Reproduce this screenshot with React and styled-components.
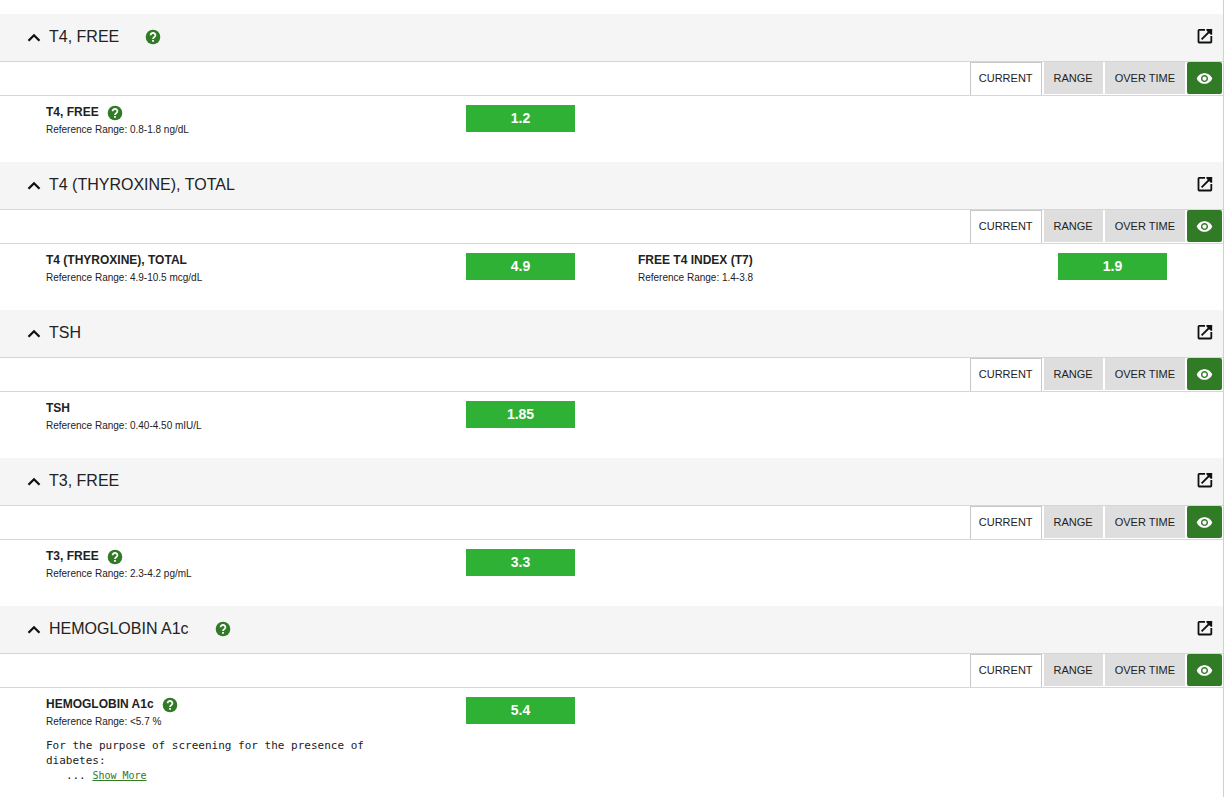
import React from "react";
import styled, { createGlobalStyle } from "styled-components";
import { MdVisibility } from "react-icons/md";

const GlobalStyle = createGlobalStyle`
  * { box-sizing: border-box; }
  body {
    margin: 0;
    background: #fff;
    color: #222;
    font-family: "Liberation Sans", Arial, sans-serif;
  }
`;

const Page = styled.main`
  min-height: 100vh;
  padding-top: 14px;
  border-right: 1px solid #d0d0d0;
`;

const Panel = styled.section`
  min-height: 148px;
`;

const PanelHeader = styled.header`
  display: flex;
  align-items: center;
  height: 48px;
  padding: 0 8px 2px 22px;
  background: #f5f5f5;
  border-bottom: 1px solid #d6d6d6;
`;

const IconButton = styled.button`
  display: flex;
  padding: 0;
  border: 0;
  background: none;
  color: ${(p) => p.$color || "#111"};
  cursor: pointer;
`;

const CollapseButton = styled(IconButton)`
  margin-right: 3px;
  padding-top: 2px;
`;

const OpenButton = styled(IconButton)`
  margin-left: auto;
  padding-bottom: 2px;
`;

const Title = styled.h2`
  margin: 0 25px 0 0;
  font-size: 16px;
  line-height: 20px;
  font-weight: 400;
`;

const Toolbar = styled.div`
  display: flex;
  justify-content: flex-end;
  gap: 2px;
  height: 34px;
  padding: 0 1px 1px 0;
  border-bottom: 1px solid #d6d6d6;
`;

const ViewButton = styled.button`
  padding: 0 10px 1px;
  border: 0;
  background: #dedede;
  color: #222;
  font-family: inherit;
  font-size: 11px;
  line-height: 16px;
  cursor: pointer;

  &[aria-pressed="true"] {
    margin-bottom: -1px;
    padding: 0 8px 3px;
    border: 1px solid #c8c8c8;
    border-bottom: 0;
    background: #fff;
  }
`;

const VisibilityButton = styled.button`
  display: flex;
  align-items: center;
  justify-content: center;
  width: 35px;
  padding: 0 1px 0 0;
  border: 0;
  border-radius: 2px;
  background: #317a26;
  color: #fff;
  cursor: pointer;
`;

const Results = styled.div`
  display: grid;
  grid-template-columns: 1fr 1fr;
  padding: 8px 20px 8px 19px;
`;

const Result = styled.div`
  display: flex;
  align-items: flex-start;
  padding: 0 36px 0 27px;
`;

const Details = styled.div`
  flex: 1;
`;

const NameRow = styled.div`
  display: flex;
  align-items: center;
  gap: 7px;
  height: 18px;
`;

const Name = styled.h3`
  margin: 0;
  padding-bottom: 2px;
  font-size: 12px;
  line-height: 16px;
  font-weight: 700;
`;

const Reference = styled.p`
  margin: 0;
  font-size: 10px;
  line-height: 16px;
`;

const Note = styled.p`
  max-width: 330px;
  margin: 8px 0 0;
  font-family: "DejaVu Sans Mono", monospace;
  font-size: 11px;
  line-height: 15px;
  white-space: pre-wrap;
`;

const MoreLink = styled.a`
  color: #317a26;
  font-size: 10px;
`;

const Value = styled.output`
  width: 109px;
  height: 27px;
  margin-top: 1px;
  background: #2fb135;
  color: #fff;
  font-size: 14px;
  line-height: 26px;
  font-weight: 700;
  text-align: center;
`;

function ChevronUp() {
  return (
    <svg width="24" height="24" viewBox="0 0 24 24" aria-hidden="true">
      <path
        d="M6.5 14.8 12 9.3l5.5 5.5"
        fill="none"
        stroke="currentColor"
        strokeWidth="2.3"
      />
    </svg>
  );
}

function OpenIcon() {
  return (
    <svg width="20" height="20" viewBox="0 0 20 20" aria-hidden="true">
      <path
        d="M10 3.9H4.2a.7.7 0 0 0-.7.7v11.2c0 .4.3.7.7.7h11.4a.7.7 0 0 0 .7-.7V10M6.6 13.4 15 5"
        fill="none"
        stroke="currentColor"
        strokeWidth="1.8"
      />
      <path d="M11.4 3h5.8v5.8h-1.4L11.4 4.4Z" fill="currentColor" />
    </svg>
  );
}

function HelpIcon() {
  return (
    <svg width="18" height="18" viewBox="0 0 18 18" aria-hidden="true">
      <circle cx="9" cy="9" r="7.3" fill="currentColor" />
      <path
        d="M6.6 7.3a2.4 2.2 0 1 1 3.9 1.6C9.6 9.6 9 9.9 9 11.1"
        fill="none"
        stroke="#fff"
        strokeWidth="1.8"
      />
      <path d="M8.1 12h1.8v1.8H8.1z" fill="#fff" />
    </svg>
  );
}

const GREEN = "#317a26";

const panels = [
  {
    title: "T4, FREE",
    help: true,
    results: [
      { name: "T4, FREE", help: true, range: "0.8-1.8 ng/dL", value: "1.2" },
    ],
  },
  {
    title: "T4 (THYROXINE), TOTAL",
    results: [
      { name: "T4 (THYROXINE), TOTAL", range: "4.9-10.5 mcg/dL", value: "4.9" },
      { name: "FREE T4 INDEX (T7)", range: "1.4-3.8", value: "1.9" },
    ],
  },
  {
    title: "TSH",
    results: [{ name: "TSH", range: "0.40-4.50 mIU/L", value: "1.85" }],
  },
  {
    title: "T3, FREE",
    results: [
      { name: "T3, FREE", help: true, range: "2.3-4.2 pg/mL", value: "3.3" },
    ],
  },
  {
    title: "HEMOGLOBIN A1c",
    help: true,
    results: [
      {
        name: "HEMOGLOBIN A1c",
        help: true,
        range: "<5.7 %",
        value: "5.4",
        note: "For the purpose of screening for the presence of diabetes:",
      },
    ],
  },
];

const views = ["CURRENT", "RANGE", "OVER TIME"];

function LabPanel({ title, help, results }) {
  const [view, setView] = React.useState("CURRENT");
  return (
    <Panel>
      <PanelHeader>
        <CollapseButton aria-label={`Collapse ${title}`}>
          <ChevronUp />
        </CollapseButton>
        <Title>{title}</Title>
        {help && (
          <IconButton $color={GREEN} aria-label={`About ${title}`}>
            <HelpIcon />
          </IconButton>
        )}
        <OpenButton aria-label={`Open ${title}`}>
          <OpenIcon />
        </OpenButton>
      </PanelHeader>
      <Toolbar>
        {views.map((v) => (
          <ViewButton key={v} aria-pressed={v === view} onClick={() => setView(v)}>
            {v}
          </ViewButton>
        ))}
        <VisibilityButton aria-label="Toggle visibility">
          <MdVisibility size={17} />
        </VisibilityButton>
      </Toolbar>
      <Results>
        {results.map((r) => (
          <Result key={r.name}>
            <Details>
              <NameRow>
                <Name>{r.name}</Name>
                {r.help && (
                  <IconButton $color={GREEN} aria-label={`About ${r.name} result`}>
                    <HelpIcon />
                  </IconButton>
                )}
              </NameRow>
              <Reference>Reference Range: {r.range}</Reference>
              {r.note && (
                <Note>
                  {r.note}
                  {"\n   ... "}
                  <MoreLink href="#more">Show More</MoreLink>
                </Note>
              )}
            </Details>
            <Value>{r.value}</Value>
          </Result>
        ))}
      </Results>
    </Panel>
  );
}

export default function App() {
  return (
    <>
      <GlobalStyle />
      <Page>
        {panels.map((p) => (
          <LabPanel key={p.title} {...p} />
        ))}
      </Page>
    </>
  );
}
